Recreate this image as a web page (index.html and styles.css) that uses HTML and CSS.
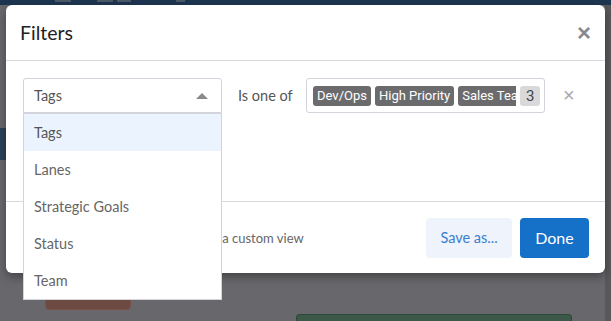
FILE: index.html
```html
<!doctype html>
<html lang="en">
  <head>
    <meta name="viewport" content="width=device-width">
    <title>Filters</title>

    <link rel="stylesheet" href="styles.css">
  </head>
  <body>
    <div id="app">
      <div class="topbar">
        <span class="tb-mark m1"></span>
        <span class="tb-mark m2"></span>
        <span class="tb-mark m3"></span>
        <span class="tb-mark m4"></span>
      </div>
      <div class="board">
        <div class="side">
          <div class="side-tab"></div>
        </div>
        <div class="lanes">
          <div class="card brown"></div>
          <div class="card green"></div>
        </div>
        <div class="edge"></div>
      </div>
    </div>

    <div id="modal">
      <div class="modal-head">
        <h1>Filters</h1>
        <button class="close">&times;</button>
      </div>

      <div class="modal-body">
        <div class="filter-row">
          <div class="select">
            <span>Tags</span>
            <span class="caret"></span>
            <ul class="menu">
              <li class="active">Tags</li>
              <li>Lanes</li>
              <li>Strategic Goals</li>
              <li>Status</li>
              <li>Team</li>
            </ul>
          </div>
          <div class="op">Is one of</div>
          <div class="values">
            <span class="chip">Dev/Ops</span>
            <span class="chip">High Priority</span>
            <span class="chip clip">Sales Team</span>
            <span class="count">3</span>
          </div>
          <button class="remove">&times;</button>
        </div>
      </div>

      <div class="modal-foot">
        <p class="hint">Save these filters and groupings as a custom view</p>
        <button class="btn save">Save as...</button>
        <button class="btn done">Done</button>
      </div>
    </div>
  </body>
</html>
```

FILE: styles.css
```css
* { box-sizing: border-box; }

html, body {
  margin: 0;
  height: 100%;
  overflow: hidden;
}

body {
  font-family: Lato, "Noto Sans", sans-serif;
  background: #68676b;
  position: relative;
}

/* dimmed app behind the dialog */
.topbar {
  height: 5px;
  background: #1e3550;
  position: relative;
}

.tb-mark {
  position: absolute;
  top: 0;
  height: 2px;
  background: #4a5868;
}
.m1 { left: 55px; width: 16px; }
.m2 { left: 97px; width: 16px; }
.m3 { left: 117px; width: 14px; }
.m4 { left: 176px; width: 9px; }

.board {
  display: flex;
  height: 316px;
}

.side {
  width: 6px;
  padding-top: 123px;
}

.side-tab {
  height: 32px;
  background: #2a4257;
}

.lanes {
  flex: 1;
  position: relative;
  overflow: hidden;
}

.card {
  position: absolute;
  border-radius: 0 0 4px 4px;
}

.brown {
  left: 39px;
  top: 292px;
  width: 86px;
  height: 13px;
  background: #6c4a41;
  border: 1px solid #7a5249;
}

.green {
  left: 290px;
  top: 309px;
  width: 276px;
  height: 7px;
  border-radius: 4px 4px 0 0;
  background: #3c5848;
  border: 1px solid #2c4a38;
  border-bottom: 0;
}

.edge {
  width: 6px;
  background: #58585c;
}

/* dialog */
#modal {
  position: absolute;
  left: 6px;
  top: 5px;
  width: 599px;
  height: 268px;
  background: #fff;
  border-radius: 6px;
  box-shadow: 0 4px 10px rgba(0, 0, 0, 0.35);
  display: flex;
  flex-direction: column;
}

.modal-head {
  height: 56px;
  border-bottom: 1px solid #d9d9df;
  display: flex;
  align-items: center;
  justify-content: space-between;
  padding: 0 14px 0 14px;
}

.modal-head h1 {
  margin: 0;
  font-size: 19.5px;
  font-weight: 400;
  color: #222;
}

.close {
  background: none;
  border: 0;
  padding: 0;
  font-size: 24px;
  line-height: 1;
  font-weight: 700;
  color: #8a8a8e;
  font-family: Arial, "Liberation Sans", sans-serif;
}

.modal-body {
  height: 141px;
  border-bottom: 1px solid #d9d9df;
  padding: 17px 17px 0;
}

.filter-row {
  display: flex;
  align-items: center;
  height: 35px;
}

.select {
  width: 199px;
  height: 35px;
  border: 1px solid #d3d3dc;
  border-radius: 3px 3px 0 0;
  display: flex;
  align-items: center;
  justify-content: space-between;
  padding: 0 10px;
  font-size: 14.5px;
  color: #555;
  position: relative;
}

.caret {
  width: 0;
  height: 0;
  border-left: 6px solid transparent;
  border-right: 6px solid transparent;
  border-bottom: 6px solid #8a8a8a;
  margin-right: 3px;
}

.menu {
  position: absolute;
  left: -1px;
  top: 34px;
  width: 199px;
  margin: 0;
  padding: 0;
  list-style: none;
  background: #fff;
  border: 1px solid #d3d3dc;
  z-index: 5;
}

.menu li {
  height: 37px;
  line-height: 37px;
  padding-left: 10px;
  color: #666;
}

.menu li.active {
  background: #ebf3fe;
  color: #555;
}

.op {
  margin-left: 16px;
  width: 68px;
  font-size: 14.5px;
  color: #555;
}

.values {
  width: 239px;
  height: 35px;
  border: 1px solid #d3d3dc;
  border-radius: 3px;
  display: flex;
  align-items: center;
  gap: 4px;
  padding: 0 6px;
  overflow: hidden;
  font-family: Roboto, Arial, sans-serif;
}

.chip {
  height: 20px;
  line-height: 20px;
  padding: 0 4px;
  border-radius: 3px;
  background: #6b6b6e;
  color: #fff;
  font-size: 13px;
  white-space: nowrap;
  flex-shrink: 0;
}

.chip.clip {
  width: 58px;
  overflow: hidden;
  border-radius: 3px 0 0 3px;
}

.count {
  height: 20px;
  width: 20px;
  line-height: 20px;
  text-align: center;
  border-radius: 3px;
  background: #d9d9dc;
  color: #444;
  font-size: 15px;
  flex-shrink: 0;
}

.remove {
  margin-left: 18px;
  background: none;
  border: 0;
  padding: 0;
  font-size: 20px;
  color: #a8a8ac;
  font-family: Arial, "Liberation Sans", sans-serif;
}

.modal-foot {
  flex: 1;
  display: flex;
  align-items: center;
  padding: 0 16px 0 17px;
  gap: 8px;
}

.hint {
  margin: 0;
  flex: 1;
  font-size: 13px;
  color: #666;
  white-space: nowrap;
}

.btn {
  height: 40px;
  border: 0;
  border-radius: 4px;
  font-family: Lato, "Noto Sans", sans-serif;
  font-size: 14.5px;
  cursor: pointer;
}

.save {
  width: 86px;
  background: #eef3fc;
  color: #3a7fcf;
}

.done {
  width: 69px;
  background: #1570c8;
  color: #fff;
  font-size: 16px;
}
```
